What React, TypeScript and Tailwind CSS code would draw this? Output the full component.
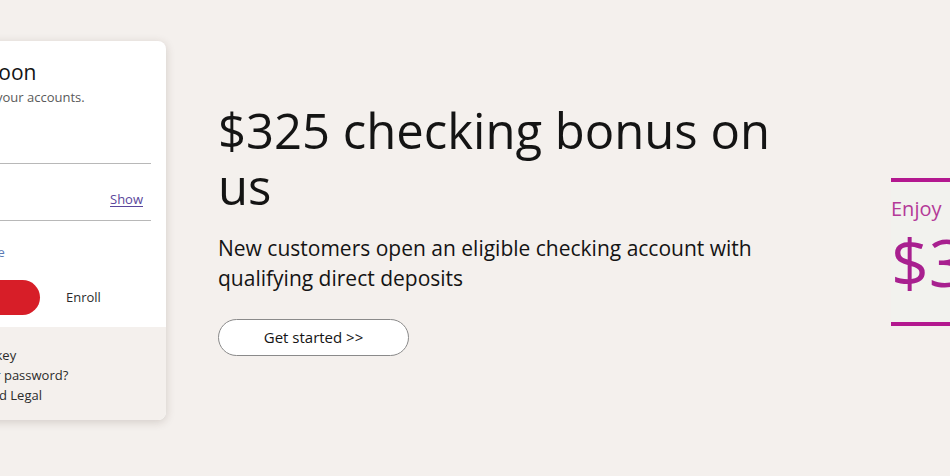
const font = { fontFamily: '"Open Sans", "Noto Sans", Arial, sans-serif' }

function SignOnCard() {
  return (
    <div className="ml-[-144px] mt-[41px] w-[310px] shrink-0 overflow-hidden rounded-lg bg-white shadow-[0_2px_10px_rgba(60,40,30,0.18)]">
      <div className="pl-6 pr-[15px] pt-[18px] pb-[12px]">
        <h2 className="text-[21px] leading-[26px] text-[#141414]">
          Good afternoon
        </h2>
        <p className="mt-[4px] text-[13px] leading-4 text-[#5a5a5a]">
          Sign on to manage your accounts.
        </p>

        <div className="mt-[12px] border-b border-[#b8b8b8] pb-[8px] pt-[14px]">
          <span className="text-[14px] text-[#5a5a5a]">Username</span>
        </div>

        <div className="mt-[25px] flex items-center justify-between border-b border-[#b8b8b8] pb-[10px] pr-[8px]">
          <span className="text-[14px] text-[#5a5a5a]">Password</span>
          <span className="text-[13px] text-[#5a469b] underline underline-offset-2">
            Show
          </span>
        </div>

        <div className="mt-[22px] flex items-center gap-3">
          <span className="h-5 w-5 rounded-sm border border-[#8a8a8a]" />
          <span className="text-[13px] text-[#5b7bb5]">Save username</span>
        </div>

        <div className="mt-[17px] flex items-center">
          <button className="h-[35px] w-[160px] rounded-full bg-[#d71e28] text-[14px] font-semibold text-white">
            Sign on
          </button>
          <span className="ml-[26px] text-[13px] text-[#2b2b2b]">Enroll</span>
        </div>
      </div>

      <div className="flex flex-col gap-[4px] bg-[#f4f0ed] px-[24px] pb-[17px] pt-[20px] text-[13px] leading-4 text-[#2b2b2b]">
        <span>Sign on with a passkey</span>
        <span>Forgot username or password?</span>
        <span>Privacy, Cookies, and Legal</span>
      </div>
    </div>
  )
}

function Hero() {
  return (
    <div className="ml-[52px] mt-[102px] w-[600px] shrink-0">
      <h1 className="text-[49px] leading-[56px] text-[#141414]">
        $325 checking bonus on us
      </h1>
      <p className="mt-[19px] text-[21px] leading-[30px] text-[#141414]">
        New customers open an eligible checking account with qualifying direct
        deposits
      </p>
      <button className="mt-[26px] h-[37px] w-[191px] rounded-full border border-[#8a8a8a] bg-white text-[15px] font-medium text-[#141414]">
        Get started &gt;&gt;
      </button>
    </div>
  )
}

function Promo() {
  return (
    <div className="ml-auto mt-[178px] w-[59px] shrink-0 overflow-hidden bg-[#f2f2ee]">
      <div className="h-[4px] w-[120px] bg-[#b3188f]" />
      <div className="w-[200px] pt-[15px] text-[20px] leading-6 text-[#b43a98]">
        Enjoy
      </div>
      <div className="mt-[8px] w-[200px] text-[66px] leading-[64px] text-[#a8208f]">
        $325
      </div>
      <div className="mt-[29px] h-[4px] w-[120px] bg-[#b3188f]" />
    </div>
  )
}

export default function App() {
  return (
    <div
      className="flex h-[476px] w-[950px] items-start overflow-hidden bg-[#f4f0ed]"
      style={font}
    >
      <SignOnCard />
      <Hero />
      <Promo />
    </div>
  )
}
